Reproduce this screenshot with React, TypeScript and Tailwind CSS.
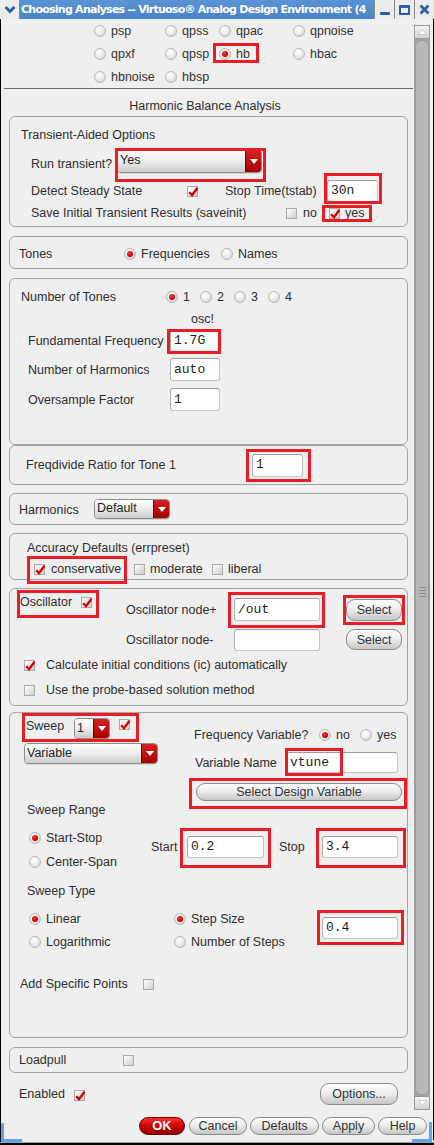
import React from "react";

function Radio({ on }: { on?: boolean }) {
  return (
    <span className="relative inline-flex w-[12px] h-[12px] shrink-0 rounded-full border border-[#b9b9b9] bg-[radial-gradient(circle_at_40%_35%,#ffffff_0%,#f0f0f0_40%,#c6c6c6_100%)] items-center justify-center">
      {on && (
        <span className="w-[6px] h-[6px] rounded-full bg-[radial-gradient(circle_at_40%_35%,#ff3a3a,#d00000_60%,#7a0000)]" />
      )}
    </span>
  );
}

function RL({ on, children, cls = "" }: { on?: boolean; children: React.ReactNode; cls?: string }) {
  return (
    <span className={`flex items-center gap-[5px] shrink-0 ${cls}`}>
      <Radio on={on} />
      <span className="whitespace-nowrap">{children}</span>
    </span>
  );
}

function Check({ on }: { on?: boolean }) {
  return (
    <span className="relative inline-block w-[11px] h-[11px] shrink-0 border border-[#ababab] bg-[linear-gradient(135deg,#ffffff,#e6e6e6_50%,#cfcfcf)]">
      {on && (
        <svg className="absolute left-[0px] top-[0px]" width="10" height="10" viewBox="0 0 10 10">
          <path d="M1.2 5.2 L4 8.2 L9.6 0.8" stroke="#d10000" strokeWidth="2.3" fill="none" strokeLinejoin="miter" />
        </svg>
      )}
    </span>
  );
}

function Field({ cls, v }: { cls: string; v?: string }) {
  return (
    <div
      className={`flex items-center shrink-0 bg-white border border-[#c4c4c4] border-t-[#9d9d9d] border-l-[#acacac] rounded-[3px] pl-[3px] font-['Liberation_Mono',monospace] text-[13px] text-[#1e1e1e] ${cls}`}
    >
      {v}
    </div>
  );
}

function Drop({ cls, v }: { cls: string; v: string }) {
  return (
    <div className={`flex shrink-0 rounded-[4px] border border-[#8e8e8e] overflow-hidden shadow-[0_1px_0_#d6d6d6] ${cls}`}>
      <div className="flex-1 flex items-center pl-[2px] pb-[2px] bg-[linear-gradient(#ffffff,#ececec_50%,#cbcbcb)] text-[#222]">{v}</div>
      <div className="w-[16px] flex items-center justify-center bg-[linear-gradient(#d62222,#a40000)] border-l border-[#7a0000]">
        <svg width="8" height="5" viewBox="0 0 8 5">
          <path d="M0 0h8L4 5z" fill="#ffffff" />
        </svg>
      </div>
    </div>
  );
}

function Btn({ cls, children }: { cls: string; children: React.ReactNode }) {
  return (
    <div
      className={`flex items-center justify-center shrink-0 rounded-[9px] border border-[#8c8c8c] bg-[linear-gradient(#fcfcfc,#ededed_45%,#c6c6c6)] text-[#333] whitespace-nowrap ${cls}`}
    >
      {children}
    </div>
  );
}

function Box({ cls, children }: { cls: string; children: React.ReactNode }) {
  return <div className={`ml-[8px] w-[399px] shrink-0 border border-[#a4a4a4] rounded-[6px] flex flex-col ${cls}`}>{children}</div>;
}

function Red({ cls }: { cls: string }) {
  return <div className={`absolute border-[3px] border-[#ec1c24] pointer-events-none ${cls}`} />;
}

export default function App() {
  return (
    <div className="relative w-[434px] h-[1145px] overflow-hidden bg-[#efefef] font-['Liberation_Sans',Arial,sans-serif] text-[12.5px] leading-[14px] text-[#2e2e2e] flex flex-col">
      {/* title bar */}
      <div className="h-[19px] shrink-0 flex">
        <div className="w-[20px] bg-[#ececec] flex items-center justify-center border-r border-[#8a8a8a]">
          <svg width="12" height="9" viewBox="0 0 12 9">
            <path d="M1.5 2 L6 6.5 L10.5 2" stroke="#2a5fa8" strokeWidth="2.8" fill="none" />
          </svg>
        </div>
        <div className="flex-1 min-w-0 overflow-hidden whitespace-nowrap bg-[linear-gradient(#5b93d6,#4a82c6)] text-white font-['DejaVu_Sans',sans-serif] font-bold text-[11px] tracking-[-0.75px] leading-[19px] pl-[1px]">
          Choosing Analyses -- Virtuoso® Analog Design Environment (4
        </div>
        <div className="w-[20px] bg-[#ececec] border-l border-[#8a8a8a] flex items-end justify-center pb-[4px]">
          <div className="w-[10px] h-[3px] rounded-[1px] bg-[#2a5fa8]" />
        </div>
        <div className="w-[20px] bg-[#ececec] border-l border-[#8a8a8a] flex items-center justify-center">
          <div className="w-[11px] h-[10px] border-[2px] border-t-[3px] border-[#2a5fa8] rounded-[1px]" />
        </div>
        <div className="w-[20px] bg-[#ececec] border-l border-[#8a8a8a] flex items-center justify-center">
          <svg width="11" height="11" viewBox="0 0 11 11">
            <path d="M1.5 1.5 L9.5 9.5 M9.5 1.5 L1.5 9.5" stroke="#2a5fa8" strokeWidth="2.8" />
          </svg>
        </div>
      </div>

      {/* frame */}
      <div className="flex-1 min-h-0 flex">
        <div className="w-[1px] bg-black" />
        <div className="w-[429px] flex flex-col">
          <div className="h-[1093px] shrink-0 flex">
            {/* main */}
            <div className="w-[413px] flex flex-col">
              <div className="h-[69px] flex flex-col pl-[93px] text-[#333]">
                <div className="h-[23px] flex items-center">
                  <RL cls="w-[71px]">psp</RL>
                  <RL cls="w-[54px]">qpss</RL>
                  <RL cls="w-[74px]">qpac</RL>
                  <RL>qpnoise</RL>
                </div>
                <div className="h-[23px] flex items-center">
                  <RL cls="w-[71px]">qpxf</RL>
                  <RL cls="w-[54px]">qpsp</RL>
                  <RL on cls="w-[74px]">hb</RL>
                  <RL>hbac</RL>
                </div>
                <div className="h-[23px] flex items-center">
                  <RL cls="w-[71px]">hbnoise</RL>
                  <RL cls="w-[54px]">hbsp</RL>
                </div>
              </div>
              <div className="ml-[3px] w-[409px] h-[1px] bg-[#6e6e6e]" />
              <div className="h-[27px] w-[408px] pt-[10px] text-center">Harmonic Balance Analysis</div>

              {/* Transient */}
              <Box cls="h-[111px]">
                <div className="mt-[7px] h-[22px] flex items-center pl-[11px]">Transient-Aided Options</div>
                <div className="mt-[2px] h-[26px] flex items-center pl-[21px]">
                  <span className="w-[86px] mt-[6px]">Run transient?</span>
                  <Drop cls="w-[145px] h-[24px]" v="Yes" />
                </div>
                <div className="mt-[5px] h-[24px] flex items-center pl-[21px]">
                  <span className="w-[156px]">Detect Steady State</span>
                  <Check on />
                  <span className="ml-[27px] w-[102px]">Stop Time(tstab)</span>
                  <Field cls="w-[51px] h-[23px]" v="30n" />
                </div>
                <div className="mt-[1px] h-[18px] flex items-center pl-[21px]">
                  <span className="w-[255px]">Save Initial Transient Results (saveinit)</span>
                  <Check />
                  <span className="ml-[6px] w-[26px]">no</span>
                  <Check on />
                  <span className="ml-[5px]">yes</span>
                </div>
              </Box>

              {/* Tones */}
              <Box cls="mt-[9px] h-[33px]">
                <div className="mt-[7px] h-[20px] flex items-center pl-[9px]">
                  <span className="w-[105px]">Tones</span>
                  <RL on cls="w-[97px]">Frequencies</RL>
                  <RL>Names</RL>
                </div>
              </Box>

              {/* Number of tones */}
              <Box cls="mt-[9px] h-[167px]">
                <div className="mt-[8px] h-[20px] flex items-center pl-[11px]">
                  <span className="w-[145px]">Number of Tones</span>
                  <RL on cls="w-[34px]">1</RL>
                  <RL cls="w-[34px]">2</RL>
                  <RL cls="w-[34px]">3</RL>
                  <RL>4</RL>
                </div>
                <div className="mt-[5px] h-[14px] pl-[181px]">osc!</div>
                <div className="mt-[3px] h-[23px] flex items-center pl-[18px]">
                  <span className="w-[142px]">Fundamental Frequency</span>
                  <Field cls="w-[50px] h-[23px]" v="1.7G" />
                </div>
                <div className="mt-[6px] h-[23px] flex items-center pl-[18px]">
                  <span className="w-[142px]">Number of Harmonics</span>
                  <Field cls="w-[50px] h-[23px]" v="auto" />
                </div>
                <div className="mt-[7px] h-[23px] flex items-center pl-[18px]">
                  <span className="w-[142px]">Oversample Factor</span>
                  <Field cls="w-[50px] h-[23px]" v="1" />
                </div>
              </Box>

              {/* Freqdivide */}
              <Box cls="h-[40px]">
                <div className="flex-1 flex items-center pl-[16px]">
                  <span className="w-[226px]">Freqdivide Ratio for Tone 1</span>
                  <Field cls="w-[51px] h-[23px]" v="1" />
                </div>
              </Box>

              {/* Harmonics */}
              <Box cls="mt-[8px] h-[32px]">
                <div className="flex-1 flex items-center pl-[9px]">
                  <span className="w-[75px] mt-[2px]">Harmonics</span>
                  <Drop cls="w-[76px] h-[20px]" v="Default" />
                </div>
              </Box>

              {/* Accuracy */}
              <Box cls="mt-[8px] h-[47px]">
                <div className="mt-[7px] h-[14px] pl-[17px]">Accuracy Defaults (errpreset)</div>
                <div className="mt-[7px] h-[14px] flex items-center pl-[24px]">
                  <Check on />
                  <span className="ml-[6px] w-[83px]">conservative</span>
                  <Check />
                  <span className="ml-[5px] w-[62px]">moderate</span>
                  <Check />
                  <span className="ml-[5px]">liberal</span>
                </div>
              </Box>

              {/* Oscillator */}
              <Box cls="mt-[8px] h-[118px]">
                <div className="mt-[6px] flex items-start pl-[10px]">
                  <div className="w-[106px] h-[14px] flex items-center">
                    <span className="w-[61px]">Oscillator</span>
                    <Check on />
                  </div>
                  <div className="mt-[3px] h-[23px] flex items-center">
                    <span className="w-[108px]">Oscillator node+</span>
                    <Field cls="w-[86px] h-[23px]" v="/out" />
                    <Btn cls="ml-[26px] w-[56px] h-[22px]">Select</Btn>
                  </div>
                </div>
                <div className="mt-[7px] h-[23px] flex items-center pl-[116px]">
                  <span className="w-[108px]">Oscillator node-</span>
                  <Field cls="w-[86px] h-[22px]" />
                  <Btn cls="ml-[26px] w-[56px] h-[21px]">Select</Btn>
                </div>
                <div className="mt-[7px] h-[14px] flex items-center pl-[14px]">
                  <Check on />
                  <span className="ml-[11px]">Calculate initial conditions (ic) automatically</span>
                </div>
                <div className="mt-[11px] h-[14px] flex items-center pl-[14px]">
                  <Check />
                  <span className="ml-[11px]">Use the probe-based solution method</span>
                </div>
              </Box>

              {/* Sweep */}
              <Box cls="mt-[6px] h-[326px]">
                <div className="flex">
                  <div className="w-[184px] flex flex-col">
                    <div className="mt-[5px] h-[21px] flex items-start pl-[16px]">
                      <span className="w-[48px] mt-[1px]">Sweep</span>
                      <Drop cls="w-[36px] h-[21px]" v="1" />
                      <span className="ml-[9px] mt-[1px] flex">
                        <Check on />
                      </span>
                    </div>
                    <div className="mt-[4px] pl-[14px]">
                      <Drop cls="w-[134px] h-[21px]" v="Variable" />
                    </div>
                  </div>
                  <div className="flex flex-col">
                    <div className="mt-[14px] h-[16px] flex items-center">
                      <span className="w-[125px]">Frequency Variable?</span>
                      <RL on cls="w-[41px]">no</RL>
                      <RL>yes</RL>
                    </div>
                    <div className="mt-[9px] h-[21px] flex items-center pl-[1px]">
                      <span className="w-[91px]">Variable Name</span>
                      <Field cls="w-[112px] h-[21px]" v="vtune" />
                    </div>
                    <div className="mt-[10px] pl-[2px]">
                      <Btn cls="w-[206px] h-[18px]">Select Design Variable</Btn>
                    </div>
                  </div>
                </div>
                <div className="mt-[2px] h-[14px] pl-[17px]">Sweep Range</div>
                <div className="mt-[12px] flex">
                  <div className="w-[141px] pl-[19px] flex flex-col">
                    <RL on cls="mt-[2px] h-[14px]">Start-Stop</RL>
                    <RL cls="mt-[10px] h-[14px]">Center-Span</RL>
                  </div>
                  <div className="mt-[7px] h-[22px] flex items-center">
                    <span className="w-[36px]">Start</span>
                    <Field cls="w-[77px] h-[22px]" v="0.2" />
                    <span className="ml-[15px] w-[43px]">Stop</span>
                    <Field cls="w-[76px] h-[22px]" v="3.4" />
                  </div>
                </div>
                <div className="mt-[15px] h-[14px] pl-[17px]">Sweep Type</div>
                <div className="mt-[14px] flex">
                  <div className="w-[164px] pl-[19px] flex flex-col">
                    <RL on cls="h-[14px]">Linear</RL>
                    <RL cls="mt-[9px] h-[14px]">Logarithmic</RL>
                  </div>
                  <div className="w-[148px] flex flex-col">
                    <RL on cls="h-[14px]">Step Size</RL>
                    <RL cls="mt-[9px] h-[14px]">Number of Steps</RL>
                  </div>
                  <div className="mt-[5px]">
                    <Field cls="w-[76px] h-[22px]" v="0.4" />
                  </div>
                </div>
                <div className="mt-[28px] h-[14px] flex items-center pl-[10px]">
                  <span className="w-[123px]">Add Specific Points</span>
                  <Check />
                </div>
              </Box>

              {/* Loadpull */}
              <Box cls="mt-[9px] h-[26px]">
                <div className="flex-1 flex items-center pl-[9px]">
                  <span className="w-[104px]">Loadpull</span>
                  <Check />
                </div>
              </Box>

              <div className="mt-[10px] h-[22px] flex items-center pl-[18px]">
                <span className="w-[55px]">Enabled</span>
                <span className="mt-[3px] flex">
                  <Check on />
                </span>
                <Btn cls="ml-auto mr-[16px] w-[78px] h-[22px]">Options...</Btn>
              </div>
            </div>

            {/* scrollbar */}
            <div className="w-[16px] flex flex-col pt-[6px] pb-[2px]">
              <div className="h-[14px] border border-[#9a9a9a] bg-[linear-gradient(#f6f6f6,#d2d2d2)] flex items-center justify-center">
                <svg width="9" height="6" viewBox="0 0 9 6">
                  <path d="M0.5 5.5 L4.5 0.5 L8.5 5.5z" fill="#ffffff" stroke="#b0b0b0" strokeWidth="0.6" />
                </svg>
              </div>
              <div className="flex-1 bg-[#a3a3a3] px-[1px] py-[1px]">
                <div className="h-full rounded-[6px] bg-[#b8b8b8] border border-[#9a9a9a] flex flex-col items-center pt-[546px]">
                  <div className="w-[7px] h-[1px] bg-[#8a8a8a]" />
                  <div className="mt-[2px] w-[7px] h-[1px] bg-[#8a8a8a]" />
                  <div className="mt-[2px] w-[7px] h-[1px] bg-[#8a8a8a]" />
                  <div className="mt-[2px] w-[7px] h-[1px] bg-[#8a8a8a]" />
                </div>
              </div>
              <div className="h-[14px] border border-[#9a9a9a] bg-[linear-gradient(#f6f6f6,#d2d2d2)] flex items-center justify-center">
                <svg width="9" height="6" viewBox="0 0 9 6">
                  <path d="M0.5 0.5 L4.5 5.5 L8.5 0.5z" fill="#ffffff" stroke="#b0b0b0" strokeWidth="0.6" />
                </svg>
              </div>
            </div>
          </div>

          {/* bottom buttons */}
          <div className="flex-1 flex items-start pt-[5px] pl-[138px]">
            <div className="w-[46px] h-[18px] shrink-0 rounded-[9px] bg-[linear-gradient(#ff3030,#cc0000_50%,#8c0000)] border border-[#700000] text-white font-bold text-[13px] flex items-center justify-center">
              OK
            </div>
            <Btn cls="ml-[4px] w-[58px] h-[18px]">Cancel</Btn>
            <Btn cls="ml-[3px] w-[69px] h-[18px]">Defaults</Btn>
            <Btn cls="ml-[3px] w-[53px] h-[18px]">Apply</Btn>
            <Btn cls="ml-[3px] w-[49px] h-[18px]">Help</Btn>
          </div>
        </div>
        <div className="w-[4px] bg-[#efefef] border-r border-black" />
      </div>
      <div className="h-[5px] shrink-0 flex flex-col">
        <div className="h-[2px] bg-[#efefef] border-l border-black" />
        <div className="h-[1px] bg-[#9c9c9c]" />
        <div className="h-[2px] bg-black" />
      </div>

      {/* window corner accents */}
      <div className="absolute left-[1px] top-[1123px] w-[3px] h-[18px] bg-[#5fa3ef]" />
      <div className="absolute left-[1px] top-[1139px] w-[21px] h-[3px] bg-[#5fa3ef]" />
      <div className="absolute left-[429px] top-[1122px] w-[3px] h-[20px] bg-[#5fa3ef]" />
      <div className="absolute left-[412px] top-[1139px] w-[20px] h-[3px] bg-[#5fa3ef]" />

      {/* annotation boxes */}
      <Red cls="left-[213px] top-[43px] w-[46px] h-[20px]" />
      <Red cls="left-[115px] top-[148px] w-[151px] h-[34px]" />
      <Red cls="left-[324px] top-[173px] w-[58px] h-[31px]" />
      <Red cls="left-[322px] top-[205px] w-[50px] h-[17px]" />
      <Red cls="left-[167px] top-[329px] w-[54px] h-[25px]" />
      <Red cls="left-[246px] top-[449px] w-[65px] h-[33px]" />
      <Red cls="left-[27px] top-[556px] w-[100px] h-[28px]" />
      <Red cls="left-[17px] top-[590px] w-[82px] h-[28px]" />
      <Red cls="left-[228px] top-[592px] w-[97px] h-[36px]" />
      <Red cls="left-[343px] top-[595px] w-[62px] h-[30px]" />
      <Red cls="left-[22px] top-[713px] w-[117px] h-[29px]" />
      <Red cls="left-[285px] top-[748px] w-[58px] h-[28px]" />
      <Red cls="left-[189px] top-[778px] w-[218px] h-[31px]" />
      <Red cls="left-[180px] top-[828px] w-[91px] h-[40px]" />
      <Red cls="left-[316px] top-[828px] w-[90px] h-[40px]" />
      <Red cls="left-[317px] top-[910px] w-[87px] h-[35px]" />
    </div>
  );
}
